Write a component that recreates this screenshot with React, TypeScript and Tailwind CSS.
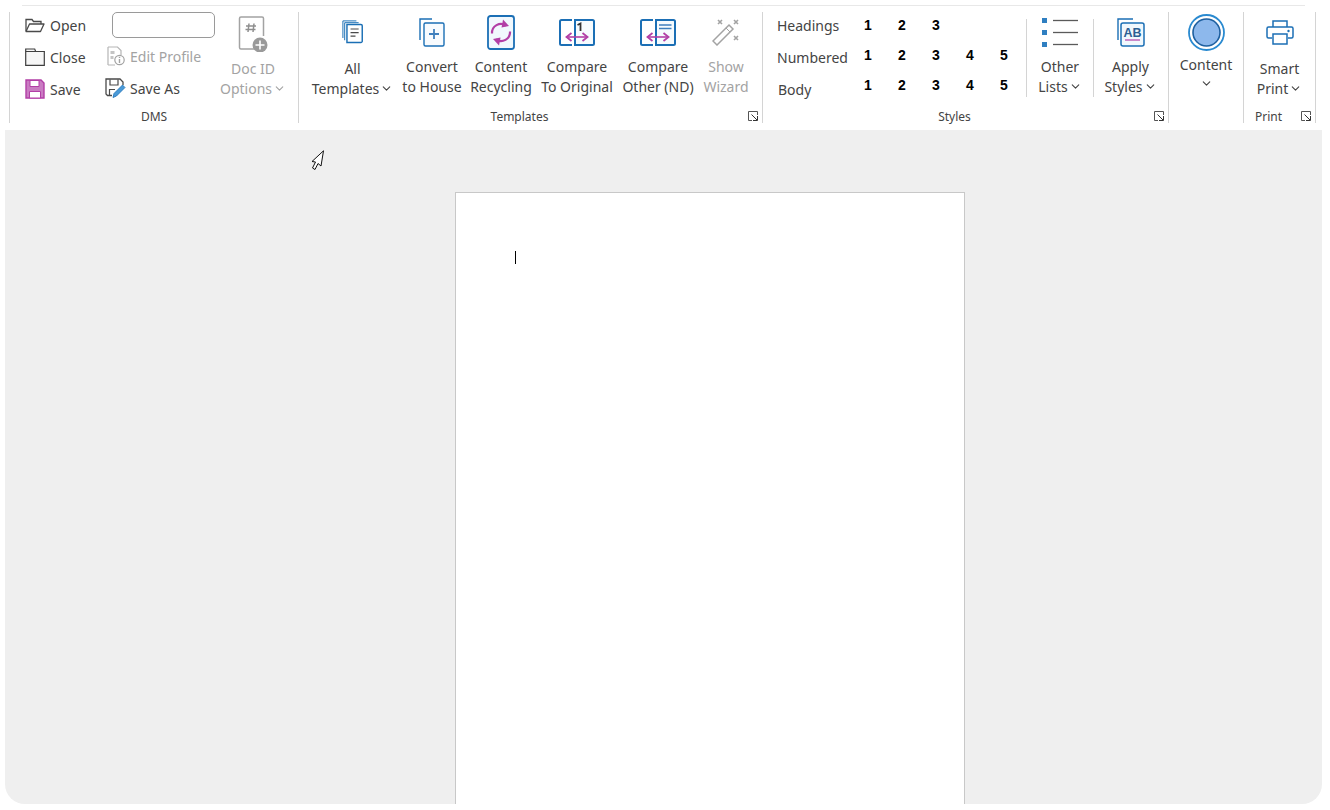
import type { ReactNode } from "react";
import { ChevronDown } from "lucide-react";

const BLUE = "#1b6fb5";
const PURPLE = "#b23fa6";
const GRAY = "#a3a3a3";
const DARK = "#4a4a4a";

const Svg = ({ w, h, scale = 1, children }: { w: number; h: number; scale?: number; children: ReactNode }) => (
  <svg width={w * scale} height={h * scale} viewBox={`0 0 ${w} ${h}`} fill="none" className="block shrink-0">
    {children}
  </svg>
);

const OpenIcon = () => (
  <Svg w={20} h={16}>
    <path d="M1 14V2.500h6l1.500 2H16v2.500" stroke={DARK} strokeWidth="1.3" />
    <path d="M1 14.500 4.500 7H19l-3.500 7.500z" stroke={DARK} strokeWidth="1.3" strokeLinejoin="round" />
  </Svg>
);

const CloseIcon = () => (
  <Svg w={20} h={18}>
    <path d="M.7 17.300V1h9l1 2.500h8.600v13.800z" stroke="#3f3f3f" strokeWidth="1.200" fill="#f6f6f6" />
    <path d="M.7 3.500h18.600" stroke="#3f3f3f" strokeWidth="1" />
  </Svg>
);

const SaveIcon = () => (
  <Svg w={20} h={20}>
    <path d="M1 1h15l3 3v15H1z" fill="#c97cc2" stroke={PURPLE} strokeWidth="1.4" />
    <path d="M5 1.500h9v6H5z" fill="#fff" stroke={PURPLE} />
    <path d="M4.500 12.500h11V19h-11z" fill="#fff" stroke={PURPLE} />
  </Svg>
);

const SaveAsIcon = () => (
  <Svg w={21} h={21}>
    <path d="M7 17.500H2.500L1 16V1h14l3 3v3" stroke={DARK} strokeWidth="1.3" />
    <path d="M5 1.500V7h8V1.500M4.500 17v-5.500H10" stroke={DARK} strokeWidth="1.2" />
    <path d="m8 19.500 1-4L17.500 7l2.500 2.500-8.500 8.500z" fill="#4a9ad8" stroke={BLUE} strokeWidth=".8" />
  </Svg>
);

const EditProfileIcon = () => (
  <Svg w={18} h={20}>
    <path d="M1 1h9.500L14 4.500V9M8 19H1z" stroke="#b5b5b5" strokeWidth="1.2" />
    <path d="M1 1v18" stroke="#b5b5b5" strokeWidth="1.2" />
    <path d="M3.500 5h4v3h-4zM3.500 10h3v3h-3z" fill="#c4c4c4" />
    <circle cx="12.500" cy="14" r="4.700" fill="#fff" stroke={GRAY} strokeWidth="1.2" />
    <path d="M12.500 13v4M12.500 10.700v1.200" stroke={GRAY} strokeWidth="1.4" />
  </Svg>
);

const DocIdIcon = () => (
  <Svg w={30} h={36}>
    <path d="M19 33H3a1.500 1.500 0 0 1-1.500-1.500v-29A1.500 1.500 0 0 1 3 1h21a1.500 1.500 0 0 1 1.500 1.500V20" stroke={GRAY} strokeWidth="1.5" />
    <path d="M11 7.500 10 16M16 7.500 15 16M8 10h10M7.500 13.500h10" stroke="#8f8f8f" strokeWidth="1.5" />
    <circle cx="22" cy="29" r="7.500" fill="#9a9a9a" />
    <path d="M22 24.500v9M17.500 29h9" stroke="#fff" strokeWidth="1.6" />
  </Svg>
);

const AllTemplatesIcon = () => (
  <Svg w={24} h={27} scale={0.9}>
    <path d="M1 20V1h15" stroke={BLUE} strokeWidth="1.1" />
    <path d="M3 22.500V3h15.500" stroke={BLUE} strokeWidth="1.1" />
    <path d="M5.500 5h15.500a1.500 1.500 0 0 1 1.500 1.500v17a1.500 1.500 0 0 1-1.500 1.500H5.500z" fill="#fff" stroke={BLUE} strokeWidth="1.6" />
    <path d="M9.500 10h9M9.500 14h9M9.500 18h5.500" stroke="#4a4a4a" strokeWidth="1.3" />
  </Svg>
);

const ConvertIcon = () => (
  <Svg w={26} h={29}>
    <path d="M1 22V1h12" stroke={BLUE} strokeWidth="1.4" />
    <rect x="5" y="5" width="20" height="23" rx="1.500" fill="#f8fbfe" stroke={BLUE} strokeWidth="1.4" />
    <path d="M15 11v10M10 16h10" stroke="#3f7fbd" strokeWidth="1.8" />
  </Svg>
);

const RecyclingIcon = () => (
  <Svg w={28} h={35}>
    <rect x="1" y="1" width="26" height="33" rx="2.500" fill="#f1f8fd" stroke={BLUE} strokeWidth="1.8" />
    <path d="M5 18.500a9 9 0 0 1 14-8" stroke={PURPLE} strokeWidth="2.200" />
    <path d="m16 4.500 6 6.500-7.500 1.500z" fill={PURPLE} />
    <path d="M23 16.500a9 9 0 0 1-14 8" stroke={PURPLE} strokeWidth="2.200" />
    <path d="m12 30.500-6-6.500 7.500-1.500z" fill={PURPLE} />
  </Svg>
);

const CompareArrow = () => (
  <>
    <path d="M8 18h20" stroke={PURPLE} strokeWidth="1.600" />
    <path d="m12.500 14-5 4 5 4M23.500 14l5 4-5 4" stroke={PURPLE} strokeWidth="1.800" />
  </>
);

const CompareBase = ({ children }: { children: ReactNode }) => (
  <Svg w={36} h={27}>
    <path d="M13 26H2.500A1.500 1.500 0 0 1 1 24.500v-22A1.500 1.500 0 0 1 2.500 1H13" stroke={BLUE} strokeWidth="2" />
    <path d="M16 26V1h17.500A1.500 1.500 0 0 1 35 2.500v22a1.500 1.500 0 0 1-1.500 1.500z" fill="#f6fbfe" stroke={BLUE} strokeWidth="2" />
    {children}
    <CompareArrow />
  </Svg>
);

const CompareOriginalIcon = () => (
  <CompareBase>
    <path d="M18.500 6 21.500 4.500V12" stroke="#333" strokeWidth="1.800" />
  </CompareBase>
);

const CompareOtherIcon = () => (
  <CompareBase>
    <path d="M19 6h12.500M19 9.500h12.500" stroke="#3f7fbd" strokeWidth="1.500" />
  </CompareBase>
);

const WizardIcon = () => (
  <Svg w={28} h={28}>
    <path d="M1 23 17 7l4 4L5 27z" fill="#fff" stroke={GRAY} strokeWidth="1.500" />
    <path d="m14 10 4 4" stroke={GRAY} />
    <path d="m6 2 4 4M10 2 6 6M22 2l4 4M26 2l-4 4M22 18l4 4M26 18l-4 4" stroke={GRAY} strokeWidth="1.600" />
  </Svg>
);

const ListsIcon = () => (
  <Svg w={37} h={31}>
    {[1, 13, 25].map((y) => (
      <g key={y}>
        <rect x="0" y={y} width="5" height="5" fill="#2f7fc1" />
        <path d={`M11 ${y + 2.5}h25`} stroke="#5a5a5a" strokeWidth="1.300" />
      </g>
    ))}
  </Svg>
);

const ApplyStylesIcon = () => (
  <Svg w={28} h={29}>
    <path d="M1 22V1h15" stroke={BLUE} strokeWidth="1.400" />
    <rect x="4" y="5" width="23" height="23" rx="2" fill="#f1f8fd" stroke={BLUE} strokeWidth="1.500" />
    <text x="15.500" y="19" textAnchor="middle" fontSize="12.500" fontWeight="700" fontFamily="Liberation Sans" fill="#2c5f93">
      AB
    </text>
    <path d="M8 22h15" stroke={PURPLE} strokeWidth="1.200" />
  </Svg>
);

const ContentIcon = () => (
  <Svg w={37} h={37}>
    <circle cx="18.500" cy="18.500" r="17.500" fill="#fff" stroke="#2a8ad0" strokeWidth="1.800" />
    <circle cx="18.500" cy="18.500" r="13.500" fill="#8db8ec" stroke="#1d5f9f" strokeWidth="1.600" />
  </Svg>
);

const PrintIcon = () => (
  <Svg w={28} h={25}>
    <path d="M7 7V1h14v6" stroke={BLUE} strokeWidth="1.500" />
    <path d="M6 18H2.500A1.500 1.500 0 0 1 1 16.500v-8A1.500 1.500 0 0 1 2.500 7h23A1.500 1.500 0 0 1 27 8.500v8a1.500 1.500 0 0 1-1.500 1.500H22" stroke={BLUE} strokeWidth="1.500" />
    <path d="M7 14h14v10H7z" fill="#fff" stroke={BLUE} strokeWidth="1.500" />
    <circle cx="22.500" cy="11" r="1.200" fill={BLUE} />
  </Svg>
);

const Launcher = () => (
  <svg width="10" height="10" viewBox="0 0 10 10" fill="none" className="block">
    <path d="M9.500 4V.5H.5v9H4" stroke="#555" />
    <path d="m3.500 3.500 5.500 5.500M9.500 5v4.500H5" stroke="#333" />
  </svg>
);

const Caret = () => <ChevronDown size={13} strokeWidth={2} className="ml-px inline-block align-[-1px]" />;

const Big = ({
  icon,
  lines,
  caret,
  w,
  gap,
  muted,
}: {
  icon: ReactNode;
  lines: string[];
  caret?: boolean;
  w: string;
  gap: string;
  muted?: boolean;
}) => (
  <div className={`flex flex-col items-center ${w} ${muted ? "text-[#a3a3a3]" : ""}`}>
    <div className="flex h-[36px] items-center justify-center">{icon}</div>
    <div className={`whitespace-nowrap text-center leading-5 ${gap}`}>
      {lines.map((l, i) => (
        <div key={l} className="h-5">
          {l}
          {caret && i === lines.length - 1 && <Caret />}
        </div>
      ))}
    </div>
  </div>
);

const Small = ({ icon, label, iconBox, muted }: { icon: ReactNode; label: string; iconBox: string; muted?: boolean }) => (
  <div className={`flex h-[32px] items-center ${muted ? "text-[#a3a3a3]" : ""}`}>
    <div className={`flex items-center ${iconBox}`}>{icon}</div>
    <span>{label}</span>
  </div>
);

const Group = ({
  w,
  label,
  labelPad,
  launcher,
  children,
}: {
  w: string;
  label?: string;
  labelPad?: string;
  launcher?: boolean;
  children: ReactNode;
}) => (
  <section className={`flex h-[111px] shrink-0 flex-col border-l border-[#d4d4d4] ${w}`}>
    <div className="h-[98px] overflow-visible">{children}</div>
    <div className={`relative mt-[2px] text-center text-[12px] leading-[12px] ${labelPad ?? ""}`}>
      {label}
      {launcher && (
        <span className="absolute right-[4px] top-0">
          <Launcher />
        </span>
      )}
    </div>
  </section>
);

const Digits = ({ values, row }: { values: number[]; row: string }) => (
  <div className={`flex ${row}`}>
    {values.map((n) => (
      <span key={n} className="w-[34px] text-center font-['Liberation_Sans'] text-[14px] font-bold text-black">
        {n}
      </span>
    ))}
  </div>
);

export default function App() {
  return (
    <div className="h-[810px] w-[1330px] overflow-hidden bg-white font-['Noto_Sans','Open_Sans',sans-serif] text-[14px] text-[#444]">
      <header className="h-[130px] pt-[5px]">
        <div className="ml-[22px] w-[1283px] border-t border-[#e8e8e8]" />
        <div className="ml-[9px] mt-[6px] flex">
          <Group w="w-[289px]" label="DMS">
            <div className="flex">
              <div className="-mt-[3px] ml-[15px] w-[79px]">
                <Small icon={<OpenIcon />} label="Open" iconBox="w-[25px]" />
                <Small icon={<CloseIcon />} label="Close" iconBox="w-[25px]" />
                <Small icon={<SaveIcon />} label="Save" iconBox="w-[25px]" />
              </div>
              <div className="w-[111px]">
                <div className="ml-[8px] h-[26px] w-[103px] rounded-[5px] border border-[#9a9a9a] bg-white" />
                <div className="mt-[2px]">
                  <Small icon={<EditProfileIcon />} label="Edit Profile" iconBox="ml-[3px] w-[23px]" muted />
                </div>
                <Small icon={<SaveAsIcon />} label="Save As" iconBox="ml-[1px] w-[25px]" />
              </div>
              <div className="w-[76px] pt-[4px]">
                <Big icon={<DocIdIcon />} lines={["Doc ID", "Options"]} caret w="w-full" gap="mt-[7px]" muted />
              </div>
            </div>
          </Group>

          <Group w="w-[464px]" label="Templates" labelPad="pr-[22px]" launcher>
            <div className="ml-[6px] flex pt-[2px]">
              <Big icon={<AllTemplatesIcon />} lines={["All", "Templates"]} caret w="w-[93px] pl-[2px]" gap="mt-[9px]" />
              <Big icon={<ConvertIcon />} lines={["Convert", "to House"]} w="w-[68px]" gap="mt-[7px]" />
              <Big icon={<RecyclingIcon />} lines={["Content", "Recycling"]} w="w-[70px]" gap="mt-[7px]" />
              <Big icon={<CompareOriginalIcon />} lines={["Compare", "To Original"]} w="w-[82px]" gap="mt-[7px]" />
              <Big icon={<CompareOtherIcon />} lines={["Compare", "Other (ND)"]} w="w-[80px]" gap="mt-[7px]" />
              <Big icon={<WizardIcon />} lines={["Show", "Wizard"]} w="w-[56px]" gap="mt-[7px]" muted />
            </div>
          </Group>

          <Group w="w-[406px]" label="Styles" labelPad="pr-[22px]" launcher>
            <div className="flex">
              <div className="-mt-[3px] ml-[14px] w-[74px]">
                <div className="flex h-[32px] items-center">Headings</div>
                <div className="flex h-[32px] items-center">Numbered</div>
                <div className="flex h-[32px] items-center pl-px">Body</div>
              </div>
              <div className="w-[175px] pt-[3px] leading-5">
                <Digits values={[1, 2, 3]} row="h-[30px]" />
                <Digits values={[1, 2, 3, 4, 5]} row="h-[30px]" />
                <Digits values={[1, 2, 3, 4, 5]} row="h-[30px]" />
              </div>
              <div className="mt-[7px] h-[78px] w-[67px] border-l border-[#d4d4d4]">
                <div className="-mt-[5px]">
                  <Big icon={<ListsIcon />} lines={["Other", "Lists"]} caret w="w-full" gap="mt-[7px]" />
                </div>
              </div>
              <div className="mt-[7px] h-[78px] w-[74px] border-l border-[#d4d4d4]">
                <div className="-mt-[5px]">
                  <Big icon={<ApplyStylesIcon />} lines={["Apply", "Styles"]} caret w="w-full" gap="mt-[7px]" />
                </div>
              </div>
            </div>
          </Group>

          <Group w="w-[75px]">
            <div className="flex flex-col items-center pt-[2px]">
              <ContentIcon />
              <div className="mt-[4px] leading-5">Content</div>
              <ChevronDown size={13} strokeWidth={2} className="mt-[2px]" />
            </div>
          </Group>

          <Group w="w-[72px]" label="Print" labelPad="pr-[22px]" launcher>
            <div className="pt-[2px]">
              <Big icon={<PrintIcon />} lines={["Smart", "Print"]} caret w="w-full" gap="mt-[9px]" />
            </div>
          </Group>
          <div className="h-[111px] border-l border-[#d4d4d4]" />
        </div>
      </header>

      <main className="relative ml-[5px] h-[674px] w-[1317px] overflow-hidden rounded-b-[20px] bg-[#efefef] pt-[62px]">
        <div className="ml-[450px] h-[620px] w-[510px] border border-[#c8c8c8] bg-white pl-[59px] pt-[58px]">
          <div className="h-[13px] w-px bg-black" />
        </div>
        {/* mouse pointer over the canvas */}
        <svg width="14" height="21" viewBox="0 0 14 21" fill="none" className="absolute left-[306px] top-[20px]">
          <path d="M12.500.8 1 11.500l3.500.5L1.500 18l2.500 1.500L7 13.500l3 2.500z" fill="#fff" stroke="#111" strokeWidth="1" strokeLinejoin="round" />
        </svg>
      </main>
    </div>
  );
}
